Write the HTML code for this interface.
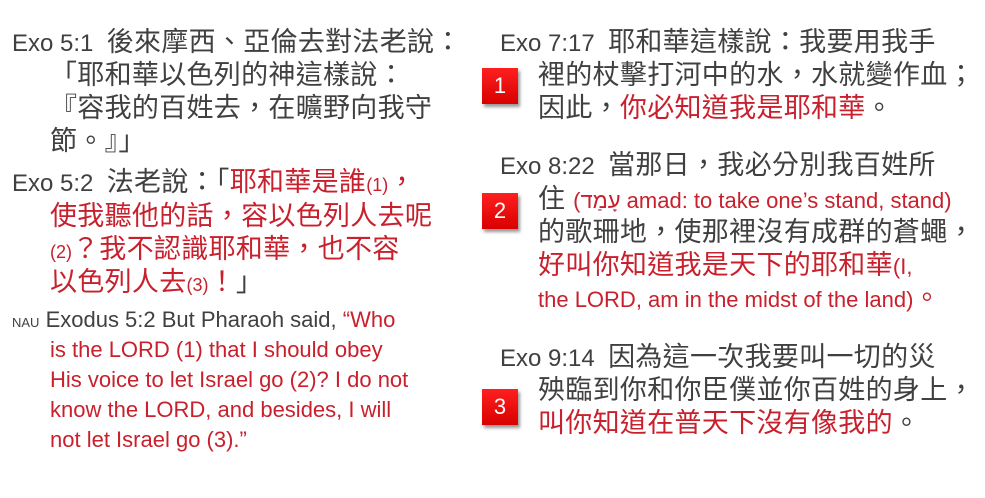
<!DOCTYPE html>
<html><head><meta charset="utf-8"><style>
body{margin:0;width:985px;height:498px;background:#fff;overflow:hidden;position:relative;font-family:"Liberation Sans","Noto Sans CJK TC",sans-serif;color:#404040}
.l{position:absolute;white-space:nowrap;font-size:27px;line-height:33px;letter-spacing:0.3px}
.p{font-size:24px;letter-spacing:0}
.r{color:#c8202c}
.s{font-size:18px;letter-spacing:0}
.e{font-size:22px;line-height:30px;letter-spacing:0}
.b{position:absolute;width:36px;height:36px;background:linear-gradient(#ff2020,#d80000);color:#fff;font-size:22px;line-height:36px;text-align:center;box-shadow:2px 3px 3px #999;letter-spacing:0}
</style></head><body>
<div class="l" style="left:12px;top:26px"><span class="p">Exo 5:1&nbsp; </span>後來摩西、亞倫去對法老說：</div>
<div class="l" style="left:50px;top:59px">「耶和華以色列的神這樣說：</div>
<div class="l" style="left:50px;top:92px">『容我的百姓去，在曠野向我守</div>
<div class="l" style="left:50px;top:125px">節。』」</div>
<div class="l" style="left:12px;top:166px"><span class="p">Exo 5:2&nbsp; </span>法老說：「<span class="r">耶和華是誰<span class="s">(1)</span>，</span></div>
<div class="l r" style="left:50px;top:200px">使我聽他的話，容以色列人去呢</div>
<div class="l r" style="left:50px;top:233px"><span class="s">(2)</span>？我不認識耶和華，也不容</div>
<div class="l" style="left:50px;top:266px"><span class="r">以色列人去<span class="s">(3)</span>！</span>」</div>
<div class="l e" style="left:12px;top:305px"><span style="font-size:13px">NAU</span> Exodus 5:2 But Pharaoh said, <span class="r">“Who</span></div>
<div class="l e r" style="left:50px;top:335px">is the LORD (1) that I should obey</div>
<div class="l e r" style="left:50px;top:365px">His voice to let Israel go (2)? I do not</div>
<div class="l e r" style="left:50px;top:395px">know the LORD, and besides, I will</div>
<div class="l e r" style="left:50px;top:425px">not let Israel go (3).”</div>

<div class="b" style="left:482px;top:68px">1</div>
<div class="b" style="left:482px;top:193px">2</div>
<div class="b" style="left:482px;top:389px">3</div>

<div class="l" style="left:500px;top:26px"><span class="p">Exo 7:17&nbsp; </span>耶和華這樣說：我要用我手</div>
<div class="l" style="left:538px;top:59px">裡的杖擊打河中的水，水就變作血；</div>
<div class="l" style="left:538px;top:92px">因此，<span class="r">你必知道我是耶和華</span>。</div>
<div class="l" style="left:500px;top:149px"><span class="p">Exo 8:22&nbsp; </span>當那日，我必分別我百姓所</div>
<div class="l" style="left:538px;top:183px">住 <span class="r e">(עָמַד amad: to take one’s stand, stand)</span></div>
<div class="l" style="left:538px;top:216px">的歌珊地，使那裡沒有成群的蒼蠅，</div>
<div class="l r" style="left:538px;top:249px">好叫你知道我是天下的耶和華<span class="e">(I,</span></div>
<div class="l r" style="left:538px;top:282px"><span class="e">the LORD, am in the midst of the land)</span>。</div>
<div class="l" style="left:500px;top:341px"><span class="p">Exo 9:14&nbsp; </span>因為這一次我要叫一切的災</div>
<div class="l" style="left:538px;top:374px">殃臨到你和你臣僕並你百姓的身上，</div>
<div class="l" style="left:538px;top:407px"><span class="r">叫你知道在普天下沒有像我的</span>。</div>
</body></html>
